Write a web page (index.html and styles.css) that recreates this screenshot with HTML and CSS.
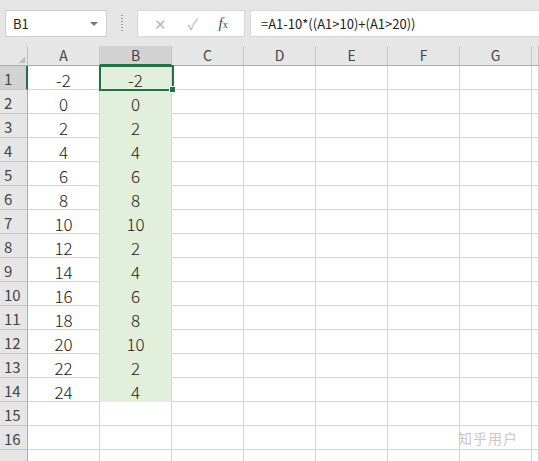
FILE: index.html
```html
<!DOCTYPE html>
<html>
  <head>
    <meta charset="utf-8">
    <title>Sheet</title>
    <link rel="stylesheet" href="styles.css">
  </head>
  <body>
    <div id="toolbar">
      <div id="namebox">
        <span>B1</span>
        <span class="caret"></span>
      </div>
      <div class="dots"></div>
      <div id="buttons">
        <span class="btn">&#x2715;</span>
        <span class="btn">&#x2713;</span>
        <span class="btn fx"><i>f</i><small>x</small></span>
      </div>
      <div id="formula">=A1-10*((A1&gt;10)+(A1&gt;20))</div>
    </div>

    <div id="sheet">
      <div id="grid"></div>
      <div id="selection"><span class="handle"></span></div>
      <div id="mark">知乎用户</div>
    </div>

    <script>
      function cell(cls, text) {
        const div = document.createElement('div');
        div.className = cls;
        div.innerText = text;
        return div;
      }

      function main() {
        const grid = document.getElementById('grid');
        const cols = ['A', 'B', 'C', 'D', 'E', 'F', 'G', ''];
        grid.appendChild(cell('corner', ''));
        for (const c of cols) {
          grid.appendChild(cell(c == 'B' ? 'colhead sel' : 'colhead', c));
        }
        for (let r = 1; r <= 17; r++) {
          // the last row is only partly in view, its number is below the edge
          const label = r < 17 ? r : '';
          grid.appendChild(cell(r == 1 ? 'rowhead sel' : 'rowhead', label));
          for (let i = 0; i < cols.length; i++) {
            let text = '';
            let cls = 'cell';
            if (r <= 14) {
              const a = 2 * r - 4;
              if (i == 0) text = a;
              if (i == 1) {
                text = a - 10 * ((a > 10) + (a > 20));
                cls += ' filled';
              }
            }
            grid.appendChild(cell(cls, text));
          }
        }
      }

      document.addEventListener('DOMContentLoaded', main);
    </script>
  </body>
</html>
```

FILE: styles.css
```css
body {
  margin: 0;
  background: #e6e6e6;
  font-family: "Noto Sans CJK SC", "Liberation Sans", sans-serif;
  overflow: hidden;
}

#toolbar {
  height: 46px;
  display: flex;
  align-items: flex-start;
  padding-top: 10px;
  box-sizing: border-box;
}

#namebox {
  margin-left: 5px;
  width: 102px;
  height: 27px;
  box-sizing: border-box;
  background: #fff;
  border: 1px solid #d0d0d0;
  display: flex;
  align-items: center;
  justify-content: space-between;
  padding: 0 8px 0 7px;
  font-size: 13px;
  color: #222;
}

.caret {
  width: 0;
  height: 0;
  border-left: 4px solid transparent;
  border-right: 4px solid transparent;
  border-top: 4px solid #777;
}

.dots {
  width: 2px;
  height: 16px;
  margin: 5px 14px 0 14px;
  background: repeating-linear-gradient(#999 0 1px, transparent 1px 3px);
}

#buttons {
  width: 108px;
  height: 27px;
  box-sizing: border-box;
  background: #fff;
  border: 1px solid #d8d8d8;
  display: flex;
  align-items: center;
  justify-content: space-around;
  padding: 0 6px;
  color: #b8b8b8;
  font-size: 15px;
}

.fx {
  color: #444;
  font-family: "Liberation Serif", serif;
  font-size: 15px;
}

.fx small {
  font-size: 10px;
}

#formula {
  margin-left: 5px;
  flex: 1;
  height: 27px;
  box-sizing: border-box;
  background: #fff;
  border: 1px solid #d8d8d8;
  border-right: none;
  padding-left: 10px;
  line-height: 25px;
  font-size: 13px;
  color: #222;
}

#sheet {
  position: relative;
}

#grid {
  display: grid;
  grid-template-columns: 28px repeat(7, 72px) 1fr;
  grid-template-rows: 20px repeat(17, 24px);
  background: #fff;
}

#grid > div {
  box-sizing: border-box;
  border-right: 1px solid #d4d4d4;
  border-bottom: 1px solid #d4d4d4;
  text-align: center;
}

#grid > .corner {
  background: #e6e6e6 linear-gradient(135deg, transparent 70%, #bdbdbd 70%) no-repeat 14px 6px / 11px 11px;
  border-right: 1px solid #bdbdbd;
  border-bottom: 1px solid #ababab;
}

#grid > .colhead {
  background: #e6e6e6;
  border-right: 1px solid #c6c6c6;
  border-bottom: 1px solid #ababab;
  font-size: 14px;
  line-height: 19px;
  color: #444;
}

#grid > .rowhead {
  background: #e6e6e6;
  border-right: 1px solid #ababab;
  border-bottom: 1px solid #c6c6c6;
  font-size: 15px;
  padding-top: 3px;
  line-height: 20px;
  color: #444;
  text-align: left;
  padding-left: 4px;
}

#grid > .sel {
  background: #d2d2d2;
}

#grid > .colhead.sel {
  border-bottom: 2px solid #217346;
}

#grid > .rowhead.sel {
  border-right: 2px solid #217346;
}

#grid > .cell {
  font-size: 17px;
  font-weight: 300;
  padding-top: 4px;
  line-height: 19px;
  color: #1a1a1a;
}

#grid > .filled {
  background: #e2efda;
  border-bottom-color: #e2efda;
}

#selection {
  position: absolute;
  left: 99px;
  top: 19px;
  width: 75px;
  height: 26px;
  box-sizing: border-box;
  border: 2px solid #217346;
}

.handle {
  position: absolute;
  right: -4px;
  bottom: -4px;
  width: 5px;
  height: 5px;
  background: #217346;
  border: 1px solid #fff;
}

#mark {
  position: absolute;
  left: 458px;
  top: 382px;
  font-size: 14px;
  color: #c8c8c8;
  letter-spacing: 1px;
}
```
